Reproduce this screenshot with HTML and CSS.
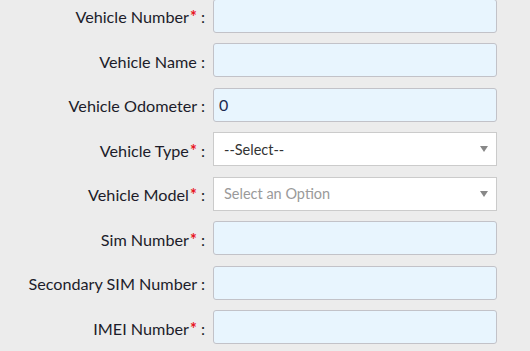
FILE: index.html
```html
<!DOCTYPE html>
<html>
<head>
<meta charset="utf-8">
<link rel="stylesheet" href="styles.css">
</head>
<body>
<form class="form">
  <label class="lbl">Vehicle Number<span class="req">*</span> :</label>
  <div class="field"><input class="inp" type="text"></div>

  <label class="lbl">Vehicle Name :</label>
  <div class="field"><input class="inp" type="text"></div>

  <label class="lbl">Vehicle Odometer :</label>
  <div class="field"><input class="inp" type="text" value="0"></div>

  <label class="lbl">Vehicle Type<span class="req">*</span> :</label>
  <div class="field"><div class="sel"><span class="sel-text">--Select--</span><span class="arrow"></span></div></div>

  <label class="lbl">Vehicle Model<span class="req">*</span> :</label>
  <div class="field"><div class="sel"><span class="sel-text placeholder">Select an Option</span><span class="arrow"></span></div></div>

  <label class="lbl">Sim Number<span class="req">*</span> :</label>
  <div class="field"><input class="inp" type="text"></div>

  <label class="lbl">Secondary SIM Number :</label>
  <div class="field"><input class="inp" type="text"></div>

  <label class="lbl">IMEI Number<span class="req">*</span> :</label>
  <div class="field"><input class="inp" type="text"></div>
</form>
</body>
</html>
```
FILE: styles.css
```css
html, body {
  margin: 0;
  padding: 0;
  background: #ececec;
}
body {
  font-family: Lato, "Open Sans", sans-serif;
  font-size: 16.2px;
  color: #1c1c2a;
  overflow: hidden;
}
.form {
  display: grid;
  grid-template-columns: 205px 284px;
  column-gap: 8px;
  row-gap: 10.5px;
  margin-top: -1.5px;
  align-items: center;
}
.lbl {
  text-align: right;
  white-space: nowrap;
  padding-top: 2px;
}
.req {
  color: #e8141e;
  margin-left: 1px;
  font-weight: bold;
}
.field {
  height: 34px;
}
.inp {
  box-sizing: border-box;
  width: 100%;
  height: 34px;
  margin: 0;
  padding: 0 5px;
  border: 1px solid #c2c2c8;
  border-radius: 3px;
  background: #e8f5fe;
  font-family: inherit;
  font-size: 16px;
  color: #1c2a50;
  outline: none;
}
.sel {
  box-sizing: border-box;
  height: 34px;
  display: flex;
  align-items: center;
  justify-content: space-between;
  padding: 0 8px 0 10px;
  border: 1px solid #cbcbcb;
  background: #fff;
}
.sel-text {
  color: #333;
  font-size: 14.5px;
}
.sel-text.placeholder {
  color: #9a9a9a;
}
.arrow {
  width: 0;
  height: 0;
  border-left: 4px solid transparent;
  border-right: 4px solid transparent;
  border-top: 6px solid #888;
}
```
